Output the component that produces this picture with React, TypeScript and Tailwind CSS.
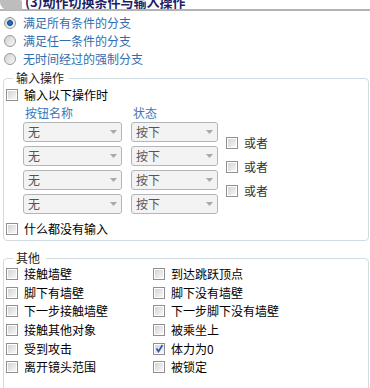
import React from "react";

const font = { fontFamily: '"Noto Sans CJK SC", "Noto Sans", sans-serif' };

function Box({ checked = false }: { checked?: boolean }) {
  return (
    <span className="w-[12px] h-[12px] border border-[#8f8f8f] bg-white p-[1px] flex shrink-0">
      <span className="flex-1 bg-linear-to-br from-[#d4d4d4] to-[#f7f7f7] flex items-center justify-center">
        {checked && (
          <svg width="9" height="9" viewBox="0 0 9 9">
            <path d="M1.5 4.5 L3.5 7.5 L7.5 1" fill="none" stroke="#2a4fa8" strokeWidth="1.6" />
          </svg>
        )}
      </span>
    </span>
  );
}

function Radio({ checked = false }: { checked?: boolean }) {
  return (
    <span className="w-[12px] h-[12px] rounded-full border border-[#9a9a9a] bg-linear-to-br from-[#d0d0d0] to-[#f8f8f8] flex items-center justify-center shrink-0">
      {checked && (
        <span className="w-[6px] h-[6px] rounded-full bg-[#1e6fd0] border border-[#0e3f80]" />
      )}
    </span>
  );
}

function Combo({ w, text }: { w: string; text: string }) {
  return (
    <div className={`${w} h-[20px] border border-[#b5b5b5] rounded-[3px] bg-[#f3f3f3] flex items-center pl-[4px] pr-[4px] text-[#555] text-[12px] leading-none`}>
      <span className="flex-1">{text}</span>
      <svg width="7" height="4" viewBox="0 0 7 4">
        <path d="M0 0H7L3.5 4Z" fill="#a8a8a8" />
      </svg>
    </div>
  );
}

function Check({ label, checked = false, color = "text-black" }: { label: string; checked?: boolean; color?: string }) {
  return (
    <div className="flex items-center gap-[6px] h-full">
      <Box checked={checked} />
      <span className={`text-[12px] leading-none ${color}`}>{label}</span>
    </div>
  );
}

export default function App() {
  const radios = ["满足所有条件的分支", "满足任一条件的分支", "无时间经过的强制分支"];
  const others: [string, boolean][] = [
    ["接触墙壁", false],
    ["到达跳跃顶点", false],
    ["脚下有墙壁", false],
    ["脚下没有墙壁", false],
    ["下一步接触墙壁", false],
    ["下一步脚下没有墙壁", false],
    ["接触其他对象", false],
    ["被乘坐上", false],
    ["受到攻击", false],
    ["体力为0", true],
    ["离开镜头范围", false],
    ["被锁定", false],
  ];
  return (
    <div className="w-[370px] h-[388px] bg-white overflow-hidden" style={font}>
      {/* header */}
      <div className="relative h-[12px] overflow-hidden">
        <div className="absolute left-0 right-0 top-[9px] h-[2px] bg-[#b4b4b4]" />
        <div className="absolute left-0 top-0 w-[22px] h-[10px] bg-[#bdbdbd] rounded-bl-[8px] rounded-tr-[2px]" />
        <div className="absolute left-[25px] top-[-6px] text-[13px] font-bold leading-[16px] text-[#1c1f66] whitespace-nowrap">
          (3)动作切换条件与输入操作
        </div>
      </div>

      {/* radios */}
      <div className="mt-[2px] flex flex-col pl-[4px]">
        {radios.map((r, i) => (
          <div key={r} className="h-[18px] flex items-center gap-[7px]">
            <Radio checked={i === 0} />
            <span className="text-[12px] leading-none text-[#2f6db0]">{r}</span>
          </div>
        ))}
      </div>

      {/* group 1 */}
      <div className="relative mt-[10px] mx-[3px] mr-[1px] border border-[#d3dbe2] rounded-[4px] pt-[7px] pb-[2px] pl-[2px]">
        <span className="absolute left-[9px] top-[-8px] bg-white px-[3px] pr-[5px] text-[12px] leading-[14px] text-[#222]">输入操作</span>
        <div className="h-[18px]">
          <Check label="输入以下操作时" />
        </div>
        <div className="h-[18px] flex items-center text-[12px] leading-none text-[#3a78bb]">
          <span className="ml-[19px] w-[108px]">按钮名称</span>
          <span>状态</span>
        </div>
        <div className="flex">
          <div className="flex flex-col gap-[4px] ml-[17px]">
            {[0, 1, 2, 3].map((i) => (
              <div key={i} className="flex gap-[9px]">
                <Combo w="w-[99px]" text="无" />
                <Combo w="w-[87px]" text="按下" />
              </div>
            ))}
          </div>
          <div className="flex flex-col pt-[9px] ml-[8px]">
            {[0, 1, 2].map((i) => (
              <div key={i} className="h-[24px]">
                <Check label="或者" color="text-[#333]" />
              </div>
            ))}
          </div>
        </div>
        <div className="h-[18px] mt-[6px]">
          <Check label="什么都没有输入" />
        </div>
      </div>

      {/* group 2 */}
      <div className="relative mt-[17px] mx-[3px] mr-[1px] border border-[#d3dbe2] rounded-[4px] pt-[6px] pb-[20px] pl-[2px]">
        <span className="absolute left-[9px] top-[-8px] bg-white px-[3px] pr-[6px] text-[12px] leading-[14px] text-[#222]">其他</span>
        <div className="grid grid-cols-[147px_1fr]">
          {others.map(([l, c]) => (
            <div key={l} className="h-[18.6px]">
              <Check label={l} checked={c} />
            </div>
          ))}
        </div>
      </div>
    </div>
  );
}
